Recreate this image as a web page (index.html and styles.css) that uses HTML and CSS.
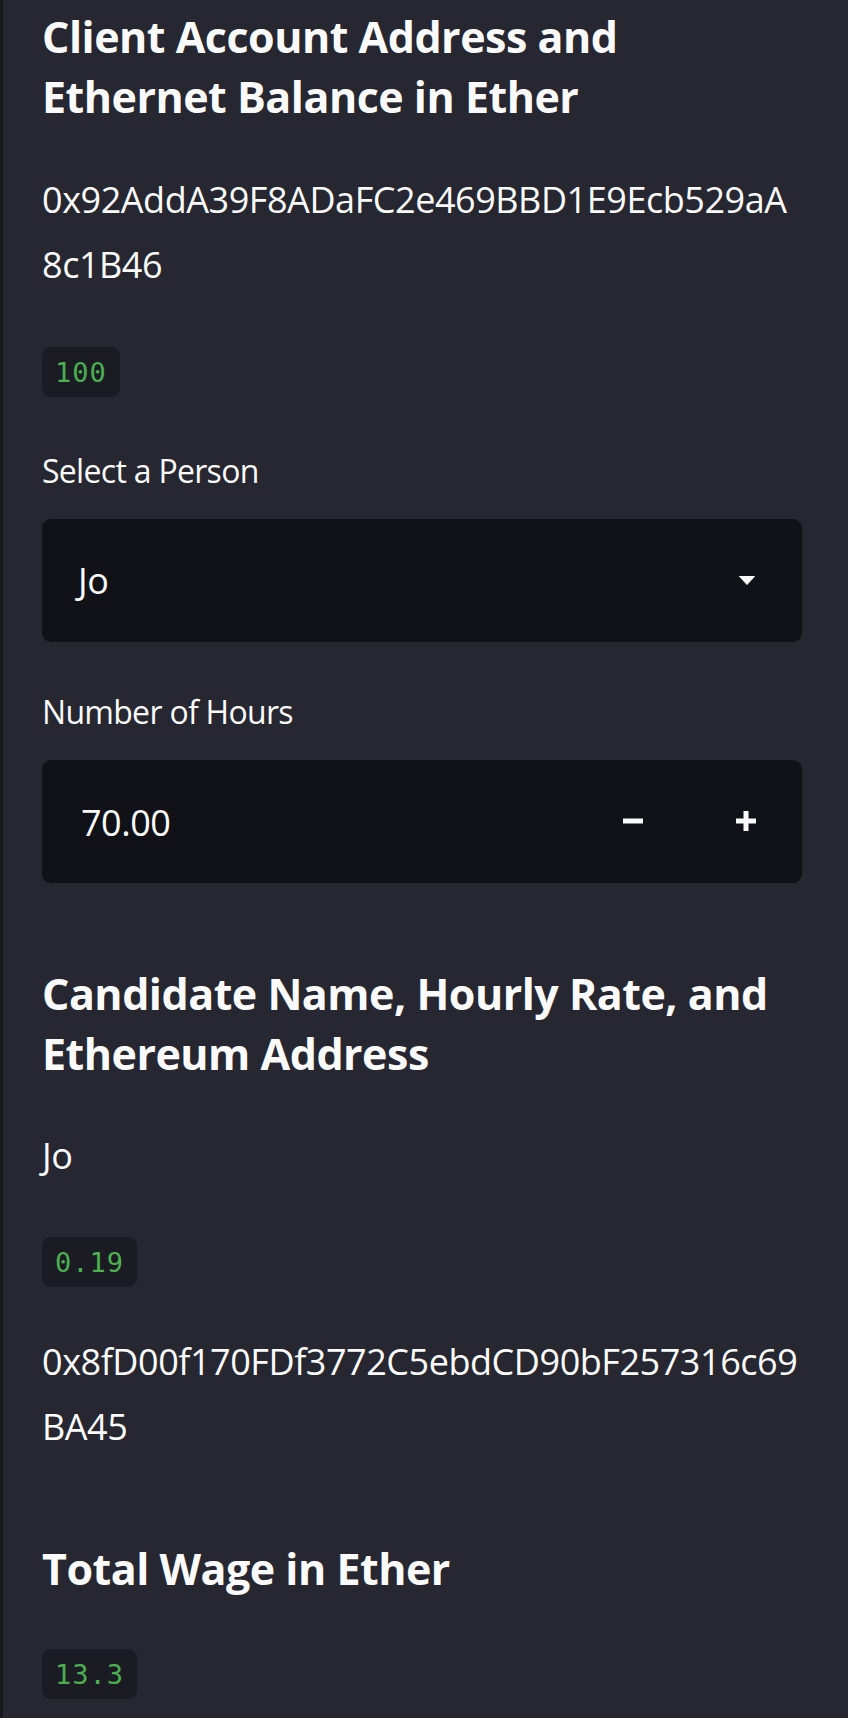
FILE: index.html
```html
<!DOCTYPE html>
<html>
<head>
<meta charset="utf-8">
<link rel="stylesheet" href="styles.css">
</head>
<body>
<aside class="sidebar">
  <h2 class="heading">Client Account Address and Ethernet Balance in Ether</h2>
  <p class="text text--after-heading">0x92AddA39F8ADaFC2e469BBD1E9Ecb529aA8c1B46</p>
  <code class="code code--after-text">100</code>

  <label class="label label--after-code">Select a Person</label>
  <div class="select">
    <span class="select__value">Jo</span>
    <svg class="select__caret" width="16" height="9" viewBox="0 0 16 9"><path d="M0.5 0.5 H15.5 L8 8.5 Z" fill="#fafafa" stroke="#fafafa" stroke-linejoin="round"/></svg>
  </div>

  <label class="label label--after-input">Number of Hours</label>
  <div class="number">
    <div class="number__input">70.00</div>
    <div class="number__steps">
      <button class="step" aria-label="decrement"><svg width="20" height="20" viewBox="0 0 20 20"><rect x="0" y="7.5" width="20" height="5" fill="#fafafa"/></svg></button>
      <button class="step" aria-label="increment"><svg width="20" height="20" viewBox="0 0 20 20"><rect x="0" y="7.5" width="20" height="5" fill="#fafafa"/><rect x="7.5" y="0" width="5" height="20" fill="#fafafa"/></svg></button>
    </div>
  </div>

  <h2 class="heading heading--after-input">Candidate Name, Hourly Rate, and Ethereum Address</h2>
  <p class="text text--after-heading2">Jo</p>
  <code class="code code--after-text">0.19</code>
  <p class="text text--after-code">0x8fD00f170FDf3772C5ebdCD90bF257316c69BA45</p>

  <h2 class="heading heading--after-text">Total Wage in Ether</h2>
  <code class="code code--after-heading">13.3</code>
</aside>
</body>
</html>
```

FILE: styles.css
```css
html, body {
  margin: 0;
  padding: 0;
  background: #262730;
}

.sidebar {
  box-sizing: border-box;
  min-height: 1718px;
  width: 848px;
  padding: 7px 46px 0 39px;
  border-left: 3px solid #17181e;
  background: #262730;
  color: #fafafa;
  font-family: "Open Sans", "Noto Sans", sans-serif;
  display: flex;
  flex-direction: column;
  align-items: stretch;
}

.heading {
  margin: 0;
  font-size: 43px;
  font-weight: 700;
  line-height: 60px;
  letter-spacing: -0.5px;
  color: #fafafa;
}

.heading--after-input { margin-top: 81px; }
.heading--after-text { margin-top: 80px; }

.text {
  margin: 0;
  font-size: 36px;
  font-weight: 400;
  line-height: 65px;
  letter-spacing: -0.45px;
  overflow-wrap: anywhere;
  word-break: break-all;
}

.text--after-heading { margin-top: 40px; }
.text--after-heading2 { margin-top: 39px; }
.text--after-code { margin-top: 42px; }

.code {
  align-self: flex-start;
  display: block;
  box-sizing: border-box;
  height: 50px;
  padding: 2px 13px 0 13px;
  border-radius: 9px;
  background: #1b1c23;
  color: #4caf50;
  font-family: "DejaVu Sans Mono", "Liberation Mono", monospace;
  font-size: 27px;
  line-height: 48px;
  letter-spacing: 1px;
}

.code--after-text { margin-top: 49.5px; }
.code--after-heading { margin-top: 50px; }

.label {
  display: block;
  margin: 0 0 26px 0;
  font-size: 32px;
  line-height: 44px;
  letter-spacing: -0.7px;
  color: #fafafa;
}

.label--after-code { margin-top: 52px; }
.label--after-input { margin-top: 48px; }

.select {
  box-sizing: border-box;
  height: 123px;
  display: flex;
  align-items: center;
  justify-content: space-between;
  padding: 0 47px 0 36px;
  border-radius: 9px;
  background: #111217;
}

.select__value {
  font-size: 36px;
  line-height: 48px;
  letter-spacing: -0.45px;
  padding-top: 2px;
}

.select__caret {
  display: block;
}

.number {
  box-sizing: border-box;
  height: 123px;
  display: flex;
  border-radius: 9px;
  background: #111217;
  overflow: hidden;
}

.number__input {
  flex: 1;
  display: flex;
  align-items: center;
  padding: 2px 0 0 39px;
  font-size: 36px;
  letter-spacing: -0.5px;
}

.number__steps {
  display: flex;
  width: 225px;
}

.step {
  flex: 1;
  display: flex;
  align-items: center;
  justify-content: center;
  padding: 0;
  border: 0;
  background: transparent;
  cursor: pointer;
}

.step svg { display: block; }
```
